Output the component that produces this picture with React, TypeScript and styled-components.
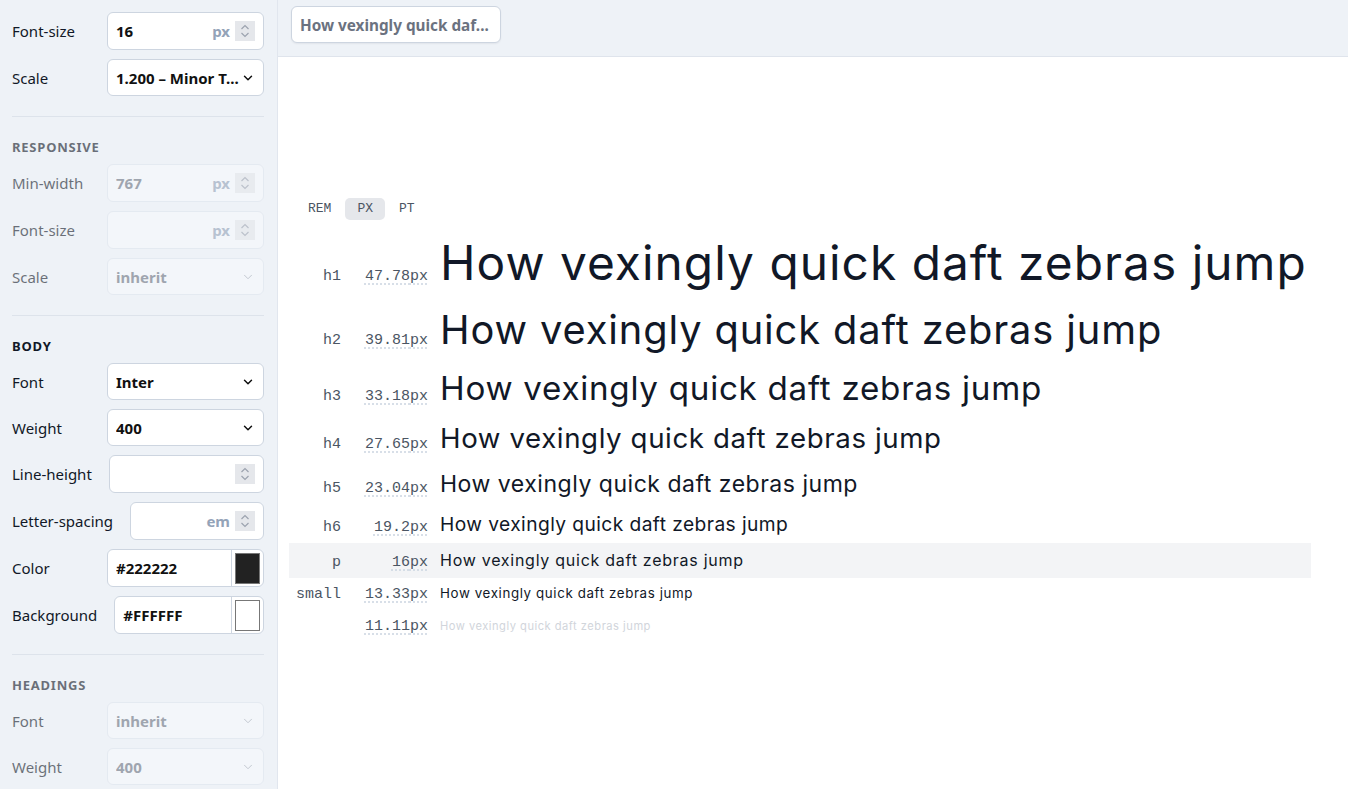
import styled, { createGlobalStyle, css } from "styled-components";
import { ChevronDown } from "lucide-react";

const Global = createGlobalStyle`
  html, body { margin: 0; padding: 0; }
  body { font-family: "Noto Sans", sans-serif; color: #111827; }
  * { box-sizing: border-box; }
`;

const Page = styled.div`
  display: flex;
  width: 100vw;
  height: 100vh;
  overflow: hidden;
`;

const Sidebar = styled.aside`
  width: 278px;
  flex-shrink: 0;
  background: #eef2f7;
  border-right: 1px solid #e1e6ee;
  padding: 12px 13px 0 12px;
  overflow: hidden;
`;

const Section = styled.section<{ $muted?: boolean }>`
  display: flex;
  flex-direction: column;
  gap: 9px;
  ${(p) =>
    p.$muted &&
    css`
      opacity: 0.6;
    `}
`;

const Divider = styled.hr`
  border: none;
  border-top: 1px solid #dde3eb;
  margin: 20px 0 20px;
`;

const Heading = styled.h3`
  margin: 0 0 -2px;
  font-size: 13px;
  font-weight: 700;
  letter-spacing: 0.06em;
  text-transform: uppercase;
  line-height: 20px;
`;

const Row = styled.div`
  display: flex;
  align-items: center;
  gap: 17px;
  label {
    min-width: 78px;
    font-size: 15px;
    white-space: nowrap;
  }
`;

const Field = styled.div<{ $disabled?: boolean; $select?: boolean }>`
  flex: 1;
  height: ${(p) => (p.$select ? 37 : 38)}px;
  display: flex;
  align-items: center;
  background: ${(p) => (p.$disabled ? "#f7f9fc" : "#fff")};
  border: 1px solid ${(p) => (p.$disabled ? "#dfe5ee" : "#cdd5e0")};
  border-radius: 6px;
  padding: 0 8px;
  font-size: 15px;
  font-weight: 700;
  color: ${(p) => (p.$disabled ? "#6b7280" : "#111")};
  overflow: hidden;
`;

const Value = styled.span`
  flex: 1;
  white-space: nowrap;
  overflow: hidden;
`;

const Unit = styled.span`
  color: #94a3b8;
  margin-right: 5px;
`;

const Spinner = styled.span`
  width: 20px;
  height: 20px;
  background: #e5e7eb;
  display: flex;
  align-items: center;
  justify-content: center;
`;

const SwatchField = styled(Field)`
  padding-right: 0;
`;

const Swatch = styled.span<{ $color: string }>`
  align-self: stretch;
  width: 32px;
  border-left: 1px solid #cdd5e0;
  display: flex;
  align-items: center;
  justify-content: center;
  &::after {
    content: "";
    width: 23px;
    height: 29px;
    background: ${(p) => p.$color};
    border: 1px solid #777;
  }
`;

const Main = styled.main`
  flex: 1;
  display: flex;
  flex-direction: column;
  background: #fff;
`;

const TopBar = styled.div`
  height: 57px;
  background: #eef2f7;
  border-bottom: 1px solid #dfe4ec;
  padding: 6px 13px;
`;

const TabButton = styled.button`
  height: 37px;
  width: 210px;
  text-align: left;
  background: #fff;
  border: 1px solid #cdd5e0;
  border-radius: 6px;
  box-shadow: 0 1px 2px rgba(15, 23, 42, 0.06);
  padding: 0 8px;
  font-family: "Noto Sans", sans-serif;
  font-size: 15.3px;
  font-weight: 700;
  color: #6b7280;
`;

const Canvas = styled.div`
  flex: 1;
  display: flex;
  flex-direction: column;
  justify-content: center;
  padding: 0 37px 4px 11px;
`;

const Units = styled.div`
  display: flex;
  gap: 2px;
  padding-left: 7px;
  margin-bottom: 8px;
`;

const UnitTab = styled.button<{ $active?: boolean }>`
  height: 22px;
  padding: 0 12px;
  border: none;
  border-radius: 5px;
  background: ${(p) => (p.$active ? "#e5e7eb" : "transparent")};
  font-family: "Liberation Mono", monospace;
  font-size: 13px;
  color: #4b5563;
`;

const ScaleRow = styled.div<{ $active?: boolean }>`
  display: grid;
  grid-template-columns: 52px 75px 1fr;
  column-gap: 12px;
  align-items: baseline;
  padding: 8px 0;
  min-height: 33px;
  background: ${(p) => (p.$active ? "#f3f4f6" : "transparent")};
`;

const Tag = styled.span`
  text-align: right;
  font-family: "Liberation Mono", monospace;
  font-size: 15px;
  line-height: 15px;
  color: #4b5563;
`;

const Size = styled(Tag)`
  justify-self: end;
  text-decoration: underline dotted #cbd5e1;
  text-underline-offset: 4px;
`;

const Sample = styled.span<{ $size: number; $faded?: boolean }>`
  font-family: Inter, sans-serif;
  font-size: ${(p) => p.$size}px;
  line-height: 1.15;
  letter-spacing: ${(p) => (p.$size > 17 ? 0.022 : 0.046)}em;
  color: ${(p) => (p.$faded ? "#d1d5db" : "#111827")};
  white-space: nowrap;
`;

function SpinIcon() {
  return (
    <svg width="12" height="16" viewBox="0 0 12 16" fill="none" stroke="#9ca3af" strokeWidth="1.2">
      <path d="M2.5 6 L6 2.5 L9.5 6" />
      <path d="M2.5 10 L6 13.5 L9.5 10" />
    </svg>
  );
}

function NumberField({ value, unit, disabled }: { value?: string; unit?: string; disabled?: boolean }) {
  return (
    <Field $disabled={disabled}>
      <Value>{value}</Value>
      {unit && <Unit>{unit}</Unit>}
      <Spinner>
        <SpinIcon />
      </Spinner>
    </Field>
  );
}

function SelectField({ value, disabled }: { value: string; disabled?: boolean }) {
  return (
    <Field $disabled={disabled} $select>
      <Value>{value}</Value>
      <ChevronDown size={14} strokeWidth={disabled ? 1.5 : 2.5} color={disabled ? "#9ca3af" : "#111"} />
    </Field>
  );
}

const scale = [
  { tag: "h1", size: 47.78 },
  { tag: "h2", size: 39.81 },
  { tag: "h3", size: 33.18 },
  { tag: "h4", size: 27.65 },
  { tag: "h5", size: 23.04 },
  { tag: "h6", size: 19.2 },
  { tag: "p", size: 16 },
  { tag: "small", size: 13.33 },
  { tag: "", size: 11.11 },
];

const sample = "How vexingly quick daft zebras jump";

export default function App() {
  return (
    <Page>
      <Global />
      <Sidebar>
        <Section>
          <Row>
            <label>Font-size</label>
            <NumberField value="16" unit="px" />
          </Row>
          <Row>
            <label>Scale</label>
            <SelectField value="1.200 – Minor T..." />
          </Row>
        </Section>
        <Divider />
        <Section $muted>
          <Heading>Responsive</Heading>
          <Row>
            <label>Min-width</label>
            <NumberField value="767" unit="px" disabled />
          </Row>
          <Row>
            <label>Font-size</label>
            <NumberField unit="px" disabled />
          </Row>
          <Row>
            <label>Scale</label>
            <SelectField value="inherit" disabled />
          </Row>
        </Section>
        <Divider />
        <Section>
          <Heading>Body</Heading>
          <Row>
            <label>Font</label>
            <SelectField value="Inter" />
          </Row>
          <Row>
            <label>Weight</label>
            <SelectField value="400" />
          </Row>
          <Row>
            <label>Line-height</label>
            <NumberField />
          </Row>
          <Row>
            <label>Letter-spacing</label>
            <NumberField unit="em" />
          </Row>
          <Row>
            <label>Color</label>
            <SwatchField>
              <Value>#222222</Value>
              <Swatch $color="#222222" />
            </SwatchField>
          </Row>
          <Row>
            <label>Background</label>
            <SwatchField>
              <Value>#FFFFFF</Value>
              <Swatch $color="#ffffff" />
            </SwatchField>
          </Row>
        </Section>
        <Divider />
        <Section $muted>
          <Heading>Headings</Heading>
          <Row>
            <label>Font</label>
            <SelectField value="inherit" disabled />
          </Row>
          <Row>
            <label>Weight</label>
            <SelectField value="400" disabled />
          </Row>
        </Section>
      </Sidebar>
      <Main>
        <TopBar>
          <TabButton>How vexingly quick daf...</TabButton>
        </TopBar>
        <Canvas>
          <Units>
            <UnitTab>REM</UnitTab>
            <UnitTab $active>PX</UnitTab>
            <UnitTab>PT</UnitTab>
          </Units>
          {scale.map((s) => (
            <ScaleRow key={s.size} $active={s.tag === "p"}>
              <Tag>{s.tag}</Tag>
              <Size>{s.size}px</Size>
              <Sample $size={s.size} $faded={s.tag === ""}>
                {sample}
              </Sample>
            </ScaleRow>
          ))}
        </Canvas>
      </Main>
    </Page>
  );
}
